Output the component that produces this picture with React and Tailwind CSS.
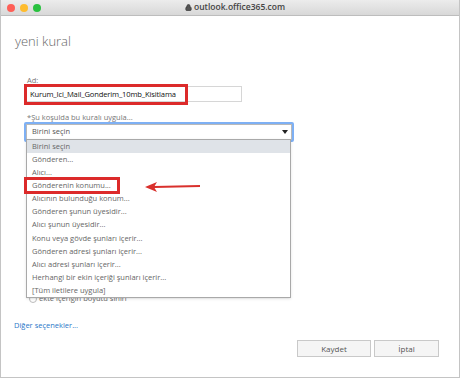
import { Lock } from "lucide-react";

const items = [
  "Birini seçin",
  "Gönderen...",
  "Alıcı...",
  "Gönderenin konumu...",
  "Alıcının bulunduğu konum...",
  "Gönderen şunun üyesidir...",
  "Alıcı şunun üyesidir...",
  "Konu veya gövde şunları içerir...",
  "Gönderen adresi şunları içerir...",
  "Alıcı adresi şunları içerir...",
  "Herhangi bir ekin içeriği şunları içerir...",
  "[Tüm iletilere uygula]",
];

export default function App() {
  return (
    <div className="w-[460px] h-[378px] relative overflow-hidden bg-white border-x border-b border-[#c4c4c4] font-['Open_Sans',sans-serif]">
      {/* title bar */}
      <div className="h-[16px] relative flex items-center bg-gradient-to-b from-[#ececec] to-[#d8d8d8] border-b border-[#bdbdbd]">
        <div className="flex items-center gap-[5px] pl-[6px]">
          <span className="w-[8px] h-[8px] rounded-full bg-[#fe5f57]" />
          <span className="w-[8px] h-[8px] rounded-full bg-[#febc2e]" />
          <span className="w-[8px] h-[8px] rounded-full bg-[#29c13f]" />
        </div>
        <div className="absolute left-[184px] top-0 h-full flex items-center gap-[2px] text-[#444]">
          <Lock size={7} strokeWidth={3} fill="#555" />
          <span className="text-[8.5px] font-semibold leading-none">outlook.office365.com</span>
        </div>
      </div>

      {/* body */}
      <div className="pl-[14px] pt-[16px] text-[13px] leading-[18px] text-[#666] font-light">yeni kural</div>

      <div className="pl-[26px] mt-[25px] text-[7.5px] leading-[10px] text-[#777]">Ad:</div>
      <div className="ml-[24px] mt-[1px] w-[217px] h-[16px] border border-[#d6d6d6] relative">
        <div className="absolute -left-[2px] -top-[3px] w-[164px] h-[21px] border-[3px] border-[#dc2a2a]" />
        <div className="pl-[4px] text-[7.6px] tracking-[-0.15px] leading-[14px] text-[#111]">Kurum_Ici_Mail_Gonderim_10mb_Kisitlama</div>
      </div>

      <div className="pl-[26px] mt-[10px] text-[7.5px] leading-[10px] text-[#777]">*Şu koşulda bu kuralı uygula...</div>
      <div className="ml-[23px] w-[270px] h-[20px] border-2 border-[#7eb0f4] rounded-[2px] relative">
        <div className="h-full border border-[#b9b9b9] flex items-center justify-between pl-[5px] pr-[3px]">
          <span className="text-[7.5px] text-[#555]">Birini seçin</span>
          <span className="w-0 h-0 border-x-[3px] border-x-transparent border-t-[4px] border-t-[#222]" />
        </div>
      </div>

      {/* partially hidden row under the list */}
      <div className="ml-[28px] mt-[152px] flex items-center gap-[2px] h-[10px]">
        <span className="w-[8px] h-[8px] rounded-full border border-[#bbb]" />
        <span className="text-[7.5px] text-[#666]">ekte içeriğin boyutu sınırı</span>
      </div>

      <div className="pl-[13px] mt-[16px] text-[7.5px] leading-[10px] text-[#2a78c8]">Diğer seçenekler...</div>

      <div className="flex justify-end gap-[3px] pr-[20px] mt-[10px]">
        <button className="w-[74px] h-[17px] bg-[#f5f5f5] border border-[#c9c9c9] text-[8px] text-[#555]">Kaydet</button>
        <button className="w-[65px] h-[17px] bg-[#f5f5f5] border border-[#c9c9c9] text-[8px] text-[#555]">İptal</button>
      </div>

      {/* open dropdown list */}
      <div className="absolute left-[25px] top-[139px] w-[265px] bg-white border border-[#a9a9a9] shadow-sm">
        {items.map((t, i) => (
          <div
            key={t}
            className={`h-[13.1px] flex items-center pl-[5px] text-[7.5px] text-[#666] ${i === 0 ? "bg-[#dfe3e8]" : ""}`}
          >
            {t}
          </div>
        ))}
      </div>

      {/* red highlight + arrow */}
      <div className="absolute left-[23px] top-[177px] w-[96px] h-[17px] border-[3px] border-[#dc2a2a]" />
      <svg className="absolute left-[143px] top-[180px]" width="58" height="14" viewBox="0 0 58 14">
        <line x1="10" y1="7" x2="56" y2="6" stroke="#d9302c" strokeWidth="2" />
        <path d="M1 7 L13 2 L10 7 L13 12 Z" fill="#d9302c" />
      </svg>
    </div>
  );
}
